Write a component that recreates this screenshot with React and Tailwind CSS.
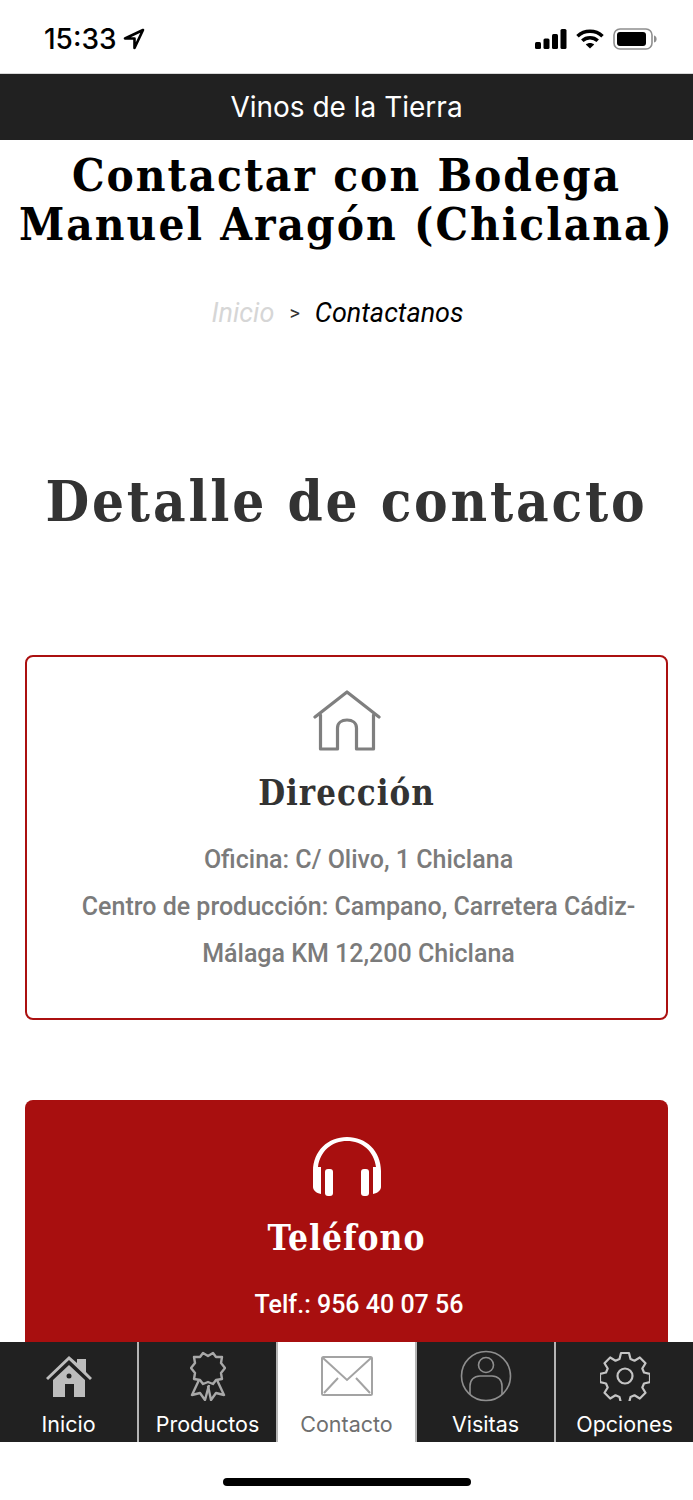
import { useState } from "react";

const serif = "font-['DejaVu_Serif_Condensed','DejaVu_Serif',serif]";

function Signal() {
  return (
    <svg width="32" height="20" viewBox="0 0 32 20" fill="#000">
      <rect x="0" y="13" width="6" height="7" rx="1.5" />
      <rect x="8.5" y="9.5" width="6" height="10.5" rx="1.5" />
      <rect x="17" y="5" width="6" height="15" rx="1.5" />
      <rect x="25.5" y="0" width="6" height="20" rx="1.5" />
    </svg>
  );
}

function Wifi() {
  return (
    <svg width="28" height="20" viewBox="0 0 28 20" fill="none" stroke="#000" strokeWidth="3.6">
      <path d="M1.5 7.2C8.5 .6 19.5 .6 26.5 7.2" />
      <path d="M6.3 11.8C10.6 7.8 17.4 7.8 21.7 11.8" />
      <path d="M14 19.5 9.8 15.4C12.2 13.4 15.8 13.4 18.2 15.4Z" fill="#000" stroke="none" />
    </svg>
  );
}

function Battery() {
  return (
    <svg width="44" height="22" viewBox="0 0 44 22">
      <rect x="1" y="1" width="38" height="20" rx="6" fill="none" stroke="#8e8e8e" strokeWidth="1.6" />
      <rect x="4" y="4" width="29" height="14" rx="3" fill="#000" />
      <path d="M41 7.5c2 .5 2.600 2 2.600 3.500s-.6 3-2.600 3.500Z" fill="#8e8e8e" />
    </svg>
  );
}

function HomeOutline() {
  return (
    <svg width="68" height="61" viewBox="0 0 68 61" fill="none" stroke="#7f7f7f" strokeWidth="3.2" strokeLinecap="round" strokeLinejoin="round">
      <path d="M2 27 34 2l32 25" />
      <path d="M7.500 25v34h17V38c0-5 4-8 9.500-8s9.500 3 9.500 8v21h17V25" />
    </svg>
  );
}

function Headphones() {
  return (
    <svg width="68" height="60" viewBox="0 0 68 60" fill="#fff">
      <path d="M0 34C0 14 15 0 34 0s34 14 34 34v16c0 3-3 6-8 7V30h3C61 14 49 4 34 4S7 14 5 30h3v27c-5-1-8-4-8-7Z" />
      <rect x="12" y="32" width="8" height="27" rx="3" />
      <rect x="48" y="32" width="8" height="27" rx="3" />
    </svg>
  );
}

function HomeSolid() {
  return (
    <svg width="48" height="44" viewBox="0 0 48 44">
      <path d="M1 24 24 2l8 7V5h9v13l6 6-2 2L24 6 3 26Z" fill="#bdbdbd" />
      <path d="M8 26 24 11l16 15v17H29V30h-9v13H8Z" fill="#bdbdbd" />
      <circle cx="24" cy="22" r="2.500" fill="#212121" />
    </svg>
  );
}

function Ribbon() {
  return (
    <svg width="36" height="50" viewBox="0 0 36 50" fill="none" stroke="#a8a8a8" strokeWidth="2.400" strokeLinejoin="round">
      <path d="M18 5l5-3 3 4h6l-1 6 4 5-4 5 1 6-6 1-3 4-5-2-5 2-3-4-6-1 1-6-4-5 4-5-1-6h6l3-4Z" />
      <path d="M9 29 2 44l8-2 5 7 4-15" />
      <path d="M27 29l7 15-8-2-5 7-3-14" />
    </svg>
  );
}

function Envelope() {
  return (
    <svg width="52" height="40" viewBox="0 0 52 40" fill="none" stroke="#a3a3a3" strokeWidth="2">
      <rect x="1" y="1" width="50" height="38" rx="1.500" />
      <path d="M2 2 26 24 50 2" />
      <path d="M3 37 17 22M49 37 35 22" />
    </svg>
  );
}

function UserCircle() {
  return (
    <svg width="52" height="52" viewBox="0 0 52 52" fill="none" stroke="#8f8f8f" strokeWidth="1.600">
      <circle cx="26" cy="26" r="24.500" />
      <circle cx="26" cy="15" r="7.500" />
      <path d="M10 44V36c0-6 4-10 10-10h12c6 0 10 4 10 10v8" />
    </svg>
  );
}

function Gear() {
  return (
    <svg width="50" height="50" viewBox="0 0 50 50" fill="none" stroke="#c4c4c4" strokeWidth="2.200" strokeLinejoin="round">
      <circle cx="25" cy="25" r="7.500" />
      <path d="M21 2h8l1.500 6 4 1.700 5.300-3.200 5.700 5.700-3.200 5.300 1.700 4 6 1.500v8l-6 1.500-1.700 4 3.200 5.300-5.700 5.700-5.300-3.200-4 1.700-1.500 6h-8l-1.500-6-4-1.700-5.300 3.200-5.700-5.700 3.200-5.300-1.700-4-6-1.500v-8l6-1.500 1.700-4-3.200-5.300 5.700-5.700 5.300 3.200 4-1.700Z" />
    </svg>
  );
}

const tabs = [
  { label: "Inicio", icon: <HomeSolid /> },
  { label: "Productos", icon: <Ribbon /> },
  { label: "Contacto", icon: <Envelope />, active: true },
  { label: "Visitas", icon: <UserCircle /> },
  { label: "Opciones", icon: <Gear /> },
];

export default function App() {
  const [tab] = useState("Contacto");

  return (
    <div className="flex h-[1500px] w-[693px] flex-col overflow-hidden bg-white font-['Inter',sans-serif]">
      <div className="flex h-[74px] shrink-0 items-center justify-between border-b border-[#d8d8d8] pl-[44px] pr-[36px] pt-[5px]">
        <div className="flex items-center gap-[6px] text-[28px] font-medium text-black">
          15:33
          <svg width="22" height="22" viewBox="0 0 22 22" fill="none" stroke="#000" strokeWidth="2.600" strokeLinejoin="round">
            <path d="M20 2 2 10.500h9.500V20Z" />
          </svg>
        </div>
        <div className="flex items-center gap-[9px]">
          <Signal />
          <Wifi />
          <Battery />
        </div>
      </div>

      <div className="flex h-[66px] shrink-0 items-center justify-center bg-[#212121] text-[28px] text-white">
        Vinos de la Tierra
      </div>

      <main className="flex-1 overflow-hidden">
        <h1 className={`${serif} mt-[11px] text-center text-[45.500px] font-bold leading-[49px] tracking-[2px] text-black`}>
          Contactar con Bodega
          <br />
          Manuel Aragón (Chiclana)
        </h1>

        <div className="mt-[44px] flex items-center justify-center pr-[18px] font-['Roboto',sans-serif] text-[27px] italic leading-[40px]">
          <span className="text-[#d6d6d6]">Inicio</span>
          <span className="mx-[15px] text-[20px] not-italic text-[#333]">&gt;</span>
          <span className="text-black">Contactanos</span>
        </div>

        <h2 className={`${serif} mt-[132px] text-center text-[56px] font-bold leading-[72px] tracking-[2.800px] text-[#333]`}>
          Detalle de contacto
        </h2>

        <section className="mx-[25px] mt-[118px] flex h-[365px] flex-col items-center rounded-[8px] border-2 border-[#ab1010] pt-[33px]">
          <HomeOutline />
          <h3 className={`${serif} mt-[20px] text-[34.500px] font-bold leading-[44px] tracking-[1px] text-[#333]`}>
            Dirección
          </h3>
          <p className="mt-[21px] pl-[26px] pr-[2px] text-center font-['Roboto',sans-serif] text-[25px] font-medium leading-[47px] text-[#7b7b7b]">
            Oficina: C/ Olivo, 1 Chiclana
            <br />
            Centro de producción: Campano, Carretera Cádiz-Málaga KM 12,200 Chiclana
          </p>
        </section>

        <section className="mx-[25px] mt-[80px] flex h-[400px] flex-col items-center rounded-[8px] bg-[#a80f0f] pt-[37px] text-white">
          <Headphones />
          <h3 className={`${serif} mt-[19px] text-[35px] font-bold leading-[44px] tracking-[1px]`}>Teléfono</h3>
          <p className="mt-[21px] pl-[25px] font-['Roboto',sans-serif] text-[25px] font-medium leading-[47px]">Telf.: 956 40 07 56</p>
        </section>
      </main>

      <nav className="flex h-[100px] shrink-0 bg-[#212121]">
        {tabs.map((t, i) => (
          <div
            key={t.label}
            className={`flex flex-1 flex-col items-center ${i > 0 ? "border-l-2 border-[#b5b5b5]" : ""} ${t.label === tab ? "bg-white text-[#6f6f6f]" : "text-white"}`}
          >
            <div className="flex h-[67px] items-center justify-center">{t.icon}</div>
            <span className="text-[21.500px] leading-[30px]">{t.label}</span>
          </div>
        ))}
      </nav>

      <div className="flex h-[58px] shrink-0 items-start justify-center pt-[36px]">
        <div className="h-[8px] w-[248px] rounded-full bg-black" />
      </div>
    </div>
  );
}
